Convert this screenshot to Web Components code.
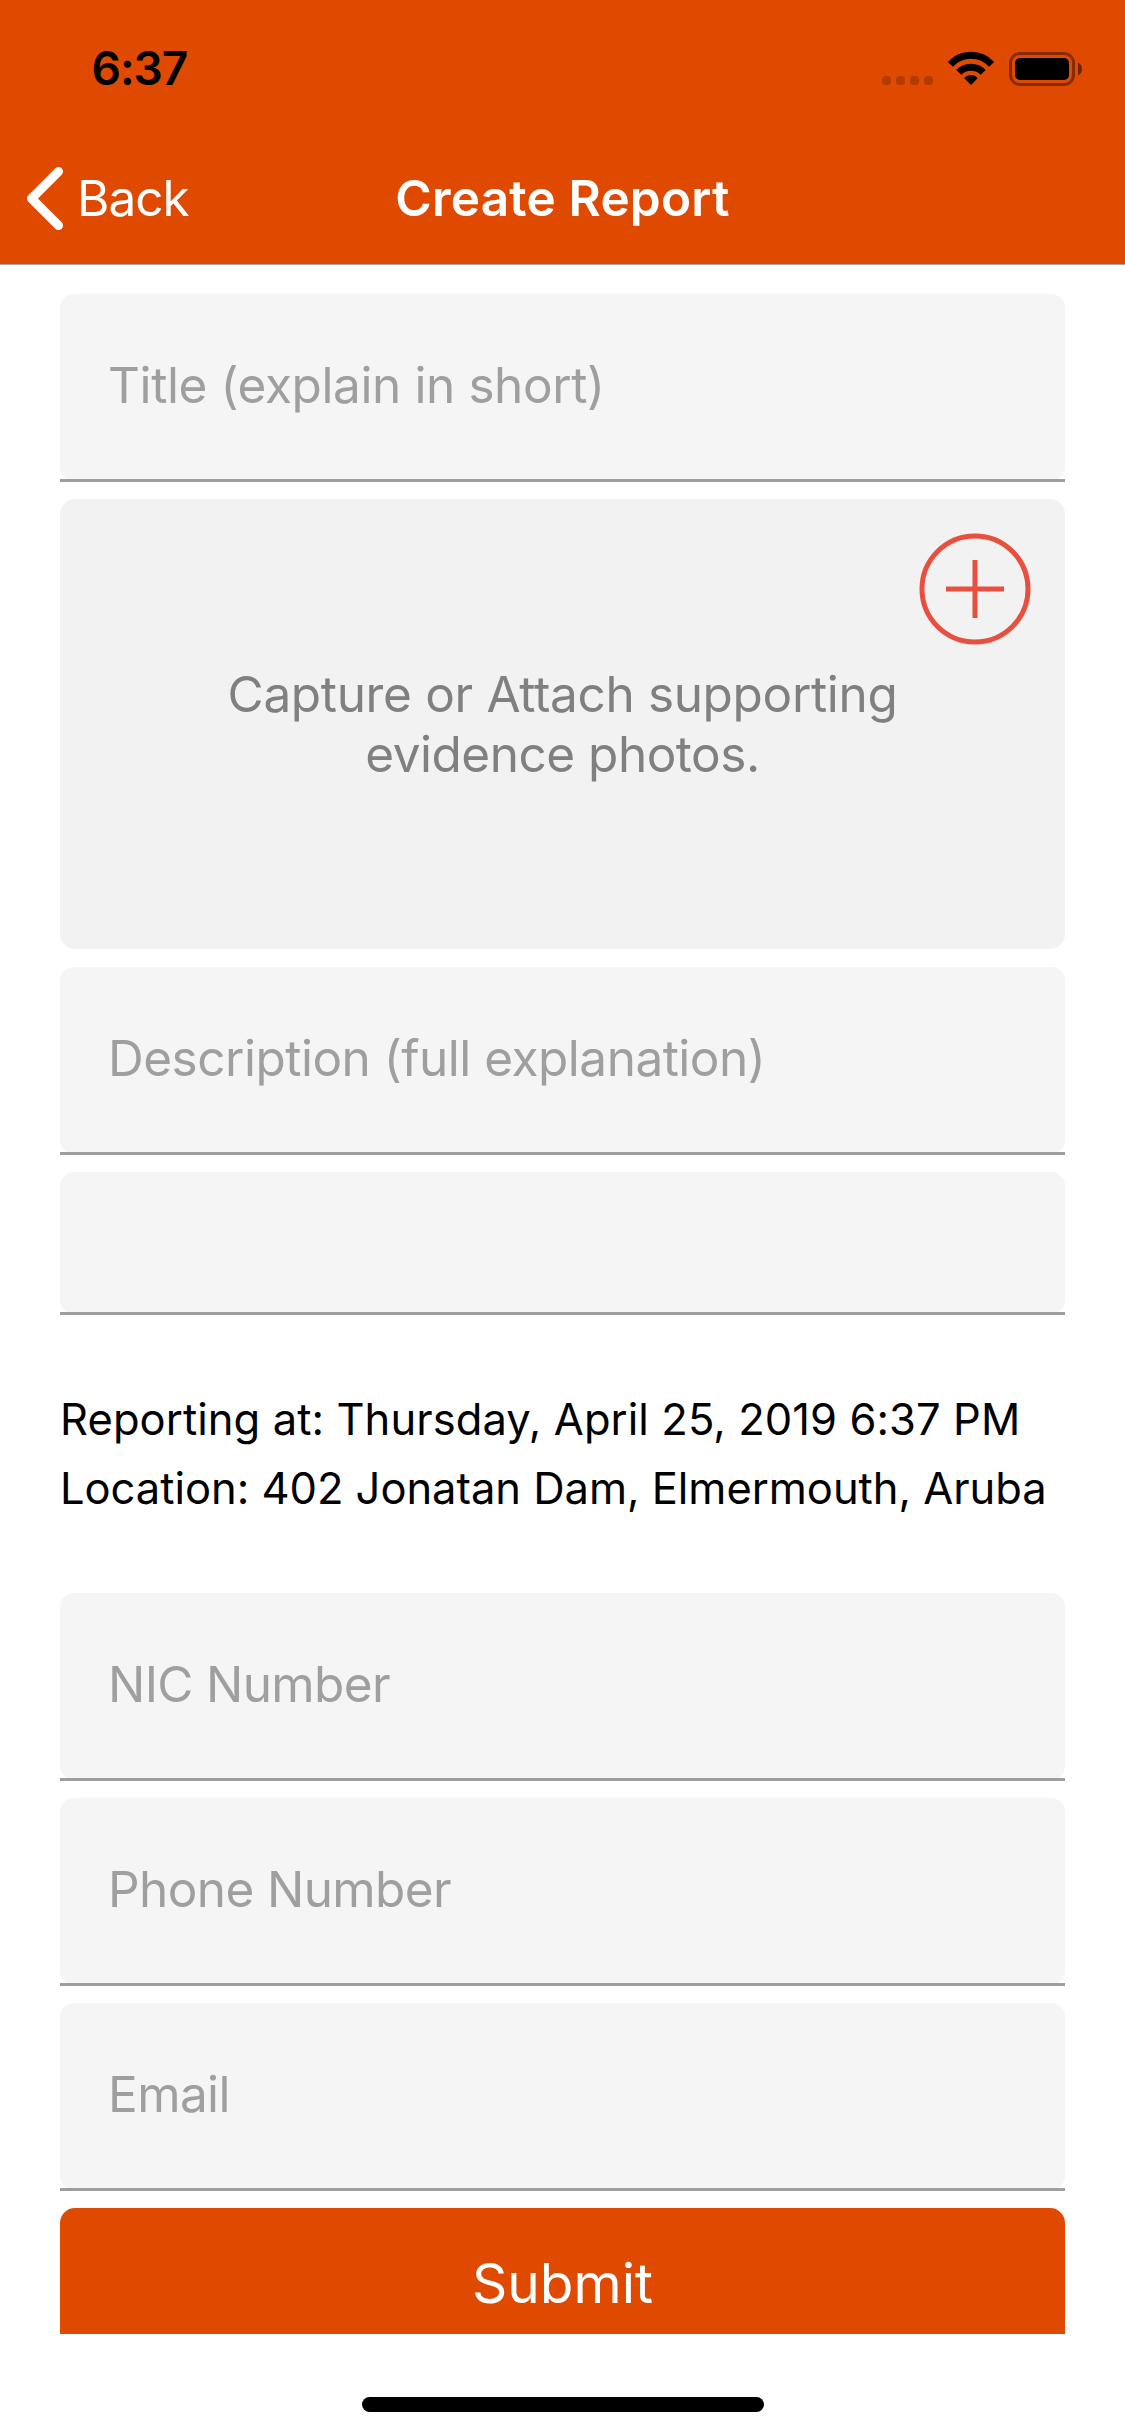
<!DOCTYPE html>
<html lang="en"><head><meta charset="utf-8"><title>Create Report</title>
<style>
html,body{margin:0;background:#fff}
body{width:1125px;height:2436px;overflow:hidden;font-family:Inter,"Liberation Sans",sans-serif}
</style></head><body>
<report-app></report-app>
<script>
const define=(name,html)=>customElements.define(name,class extends HTMLElement{
  constructor(){super();this.attachShadow({mode:'open'}).innerHTML=html;}
});
define('status-bar',`<style>
:host{display:flex;height:132px;box-sizing:border-box;padding:0 41px 0 91.5px;justify-content:space-between;color:#000}
.time{font-size:46px;font-weight:600;line-height:137px;letter-spacing:-1px}
svg{display:block;margin-top:48px}
</style><span class="time"><slot></slot></span>
<svg width="204" height="42" viewBox="880 48 204 42">
<g fill-opacity=".2"><rect x="882" y="76" width="9" height="9" rx="3.5"/><rect x="896" y="76" width="9" height="9" rx="3.5"/><rect x="910" y="76" width="9" height="9" rx="3.5"/><rect x="924" y="76" width="9" height="9" rx="3.5"/></g>
<g fill="none" stroke="#000" stroke-width="7"><path d="M950.4 64.4A28 28 0 0 1 991.6 64.4"/><path d="M958.8 72.4A17 17 0 0 1 983.2 72.4"/></g>
<path d="M964.3 78.3Q967 75 971 75Q975 75 977.7 78.3L971 85Z"/>
<rect x="1010.5" y="53.5" width="63" height="31" rx="9.5" fill="none" stroke="#000" stroke-opacity=".4" stroke-width="3"/>
<rect x="1015" y="58" width="54" height="22" rx="5"/>
<path d="M1078 62.5Q1082 64.500 1082 69Q1082 73.500 1078 75.500Z" fill-opacity=".5"/>
</svg>`);
define('nav-bar',`<style>
:host{display:grid;grid-template-columns:1fr auto 1fr;height:132px;align-items:center;color:#fff;border-bottom:1px solid #a9a9a9;line-height:132px}
.back{display:flex;align-items:center;padding-left:24px;font-size:49.5px;letter-spacing:-1px}
svg{margin-right:9px}
.title{font-size:49.5px;font-weight:600;letter-spacing:.18px}
</style><div class="back"><svg width="44" height="68" viewBox="24 164 44 68" fill="none" stroke="#fff" stroke-width="9" stroke-linecap="round" stroke-linejoin="round"><path d="M58.500 171.500L31.500 198.500L58.500 225.500"/></svg><span><slot name="back"></slot></span></div><div class="title"><slot></slot></div>`);
define('form-field',`<style>
:host{display:grid;height:188px;color:#9f9f9f;font-size:49.5px;line-height:182px}
:host([compact]){height:143px}
.box,.line{grid-area:1/1}
.box{padding-left:48px;margin-bottom:1px;border-radius:14px;background:#f5f5f5;white-space:nowrap}
.line{align-self:end;height:3px;background:#9e9e9e}
</style><div class="box"><slot></slot></div><div class="line"></div>`);
define('photo-picker',`<style>
:host{display:flex;position:relative;height:450px;align-items:center;justify-content:center;border-radius:15px;background:#f2f2f2;color:#808080;font-size:49.5px;line-height:60px;text-align:center}
svg{position:absolute;right:34px;top:34px}
</style><div><slot></slot></div>
<svg width="112" height="112" viewBox="0 0 112 112" fill="none" stroke="#e94f3f" stroke-width="5"><circle cx="56" cy="56" r="53"/><path d="M27 56H85M56 27V85"/></svg>`);
define('report-meta',`<style>
:host{display:block;color:#000;font-size:43.5px;line-height:69px;white-space:nowrap}
</style><slot></slot>`);
define('submit-button',`<style>
:host{display:block;height:126px;overflow:hidden}
.b{height:150px;border-radius:15px;background:#e04a00;color:#fff;font-size:55px;line-height:150px;text-align:center}
</style><div class="b"><slot></slot></div>`);
define('home-indicator',`<style>:host{display:block;width:402px;height:15px;border-radius:7.5px;background:#000;margin:63px auto 0}</style>`);
define('report-app',`<style>
:host{display:block}
header{background:#e04a00}
main{display:flex;flex-direction:column;padding:29px 60px 0;gap:17px}
photo-picker{margin-bottom:1px}
report-meta{margin:53px 0 53px}
.title{letter-spacing:-.4px}
.caption{letter-spacing:-.34px}
.caption2{letter-spacing:-.49px}
.desc{letter-spacing:-.5px}
.date{letter-spacing:.08px}
.place{letter-spacing:-.03px}
.nic{letter-spacing:-.65px}
.contact{letter-spacing:-.6px}
</style>
<header><status-bar><span>6:37</span></status-bar><nav-bar><span slot="back">Back</span><span>Create Report</span></nav-bar></header>
<main>
<form-field><span class="title">Title (explain in short)</span></form-field>
<photo-picker><span class="caption">Capture or Attach supporting</span><br><span class="caption2">evidence photos.</span></photo-picker>
<form-field><span class="desc">Description (full explanation)</span></form-field>
<form-field compact></form-field>
<report-meta><span class="date">Reporting at: Thursday, April 25, 2019 6:37 PM</span><br><span class="place">Location: 402 Jonatan Dam, Elmermouth, Aruba</span></report-meta>
<form-field><span class="nic">NIC Number</span></form-field>
<form-field><span class="contact">Phone Number</span></form-field>
<form-field><span class="contact">Email</span></form-field>
<submit-button><span>Submit</span></submit-button>
</main>
<home-indicator></home-indicator>`);
</script></body></html>
